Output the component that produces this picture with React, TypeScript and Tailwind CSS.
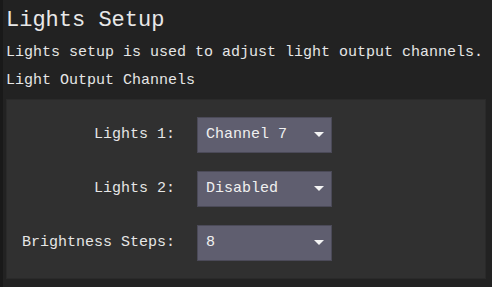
const rows = [
  { label: "Lights 1:", value: "Channel 7" },
  { label: "Lights 2:", value: "Disabled" },
  { label: "Brightness Steps:", value: "8" },
];

function Select({ value }: { value: string }) {
  return (
    <div className="flex h-[36px] w-[135px] items-center justify-between border border-[#4b4a58] bg-[#5f5e6f] pl-[8px] pr-[7px] text-[15px] text-[#f0f0f0]">
      <span>{value}</span>
      <svg width="10" height="6" viewBox="0 0 10 6">
        <path d="M0 0 L10 0 L5 5 Z" fill="#f4f4f4" />
      </svg>
    </div>
  );
}

export default function App() {
  return (
    <div
      className="flex h-[287px] w-[492px] flex-col border-l-[3px] border-[#191919] bg-[#222222] pl-[3px] pr-[6px] text-[#e6e6e6]"
      style={{ fontFamily: '"Liberation Mono", "DejaVu Sans Mono", monospace' }}
    >
      <h1 className="mt-[6px] text-[22px] leading-[30px] text-[#e8e8e8]">Lights Setup</h1>
      <p className="mt-[3px] text-[15px] leading-[28px]">
        Lights setup is used to adjust light output channels.
      </p>
      <p className="text-[15px] leading-[28px]">Light Output Channels</p>
      <div className="mt-[4px] flex h-[180px] flex-col gap-[18px] border border-[#2a2a2a] bg-[#303030] pt-[17px]">
        {rows.map((r) => (
          <div key={r.label} className="flex items-center">
            <div className="w-[170px] pr-[2px] text-right text-[15px] text-[#e6e6e6]">{r.label}</div>
            <div className="ml-[20px]">
              <Select value={r.value} />
            </div>
          </div>
        ))}
      </div>
    </div>
  );
}
